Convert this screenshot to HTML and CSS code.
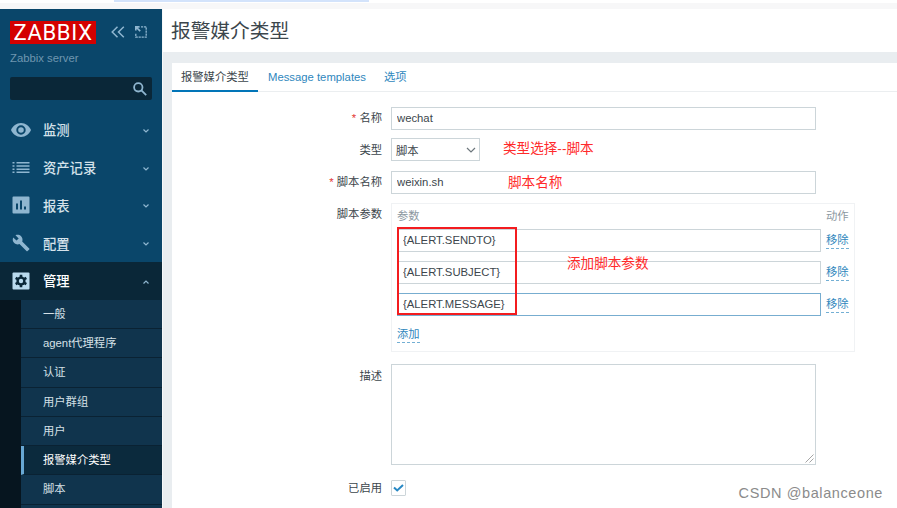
FILE: index.html
```html
<!DOCTYPE html>
<html lang="zh-CN">
<head>
  <meta charset="UTF-8">
  <title>报警媒介类型</title>
  <link rel="stylesheet" href="styles.css">
</head>
<body>

  <div class="browser-strip"><div class="browser-tab"></div></div>

  <div class="layout">
    <aside class="sidebar">
      <div class="sidebar-header">
        <div class="logo">ZABBIX</div>
        <svg class="icon-collapse" viewBox="0 0 14 12"><path d="M6.5 .8 1.2 6l5.3 5.2M12.8 .8 7.5 6l5.3 5.2"/></svg>
        <svg class="icon-hide" viewBox="0 0 12 12"><path d="M6 .8h5.200v10.400H.8V7" stroke-dasharray="2.200 .8"/><path d="M.8 4.600V.8h3.800M1 1l4.200 4.200" stroke-width="1.700"/></svg>
      </div>
      <div class="server-name">Zabbix server</div>
      <div class="search">
        <svg viewBox="0 0 14 14"><circle cx="5.3" cy="5.3" r="4.2"/><path d="m8.400 8.400 4.800 4.800"/></svg>
      </div>

      <nav class="menu">
        <a class="menu-item">
          <svg class="menu-icon" viewBox="0 0 20 20"><path fill-rule="evenodd" d="M10 3C5.500 3 1.700 5.900 0 10c1.700 4.100 5.500 7 10 7s8.300-2.900 10-7c-1.700-4.100-5.500-7-10-7zm0 11.700a4.700 4.700 0 1 1 0-9.400 4.700 4.700 0 0 1 0 9.400zM10 7.200a2.800 2.800 0 1 0 0 5.600 2.800 2.800 0 0 0 0-5.600z"/></svg>
          <span>监测</span>
          <svg class="chevron" viewBox="0 0 8 8"><path d="m1.500 2.500 2.500 2.500 2.500-2.500"/></svg>
        </a>
        <a class="menu-item">
          <svg class="menu-icon" viewBox="0 0 20 20"><path d="M1.500 4h2v1.500h-2zM5.500 4h13v1.500h-13zM1.500 7.200h2v1.500h-2zM5.500 7.200h13v1.500h-13zM1.500 10.400h2v1.500h-2zM5.500 10.400h13v1.500h-13zM1.500 13.600h2v1.500h-2zM5.500 13.600h13v1.500h-13z"/></svg>
          <span>资产记录</span>
          <svg class="chevron" viewBox="0 0 8 8"><path d="m1.500 2.500 2.500 2.500 2.500-2.500"/></svg>
        </a>
        <a class="menu-item">
          <svg class="menu-icon" viewBox="0 0 20 20"><path fill-rule="evenodd" d="M2.500 1.500h15a1 1 0 0 1 1 1v15a1 1 0 0 1-1 1h-15a1 1 0 0 1-1-1v-15a1 1 0 0 1 1-1zM5 8.500v6h2v-6zM9 5.500v9h2v-9zM13 11.500v3h2v-3z"/></svg>
          <span>报表</span>
          <svg class="chevron" viewBox="0 0 8 8"><path d="m1.500 2.500 2.500 2.500 2.500-2.500"/></svg>
        </a>
        <a class="menu-item">
          <svg class="menu-icon" viewBox="0 0 20 20"><path d="m18.200 15.500-7-7c.7-1.800.3-3.900-1.100-5.300C8.600 1.700 6.300 1.400 4.500 2.200l3.200 3.200-2.200 2.200L2.200 4.400C1.300 6.200 1.700 8.500 3.200 10c1.400 1.400 3.500 1.800 5.300 1.100l7 7c.3.300.8.300 1.100 0l1.600-1.600c.4-.3.400-.8 0-1z"/></svg>
          <span>配置</span>
          <svg class="chevron" viewBox="0 0 8 8"><path d="m1.500 2.500 2.500 2.500 2.500-2.500"/></svg>
        </a>
        <a class="menu-item active">
          <svg class="menu-icon" viewBox="0 0 20 20"><rect x="1.500" y="1.500" width="17" height="17" rx="1"/><g class="gear"><circle cx="10" cy="10" r="4.600"/><path d="M8.700 3.800h2.600v12.400H8.700zM4 8l1.300-2.300L16 12l-1.300 2.300zM4 12l1.300 2.300L16 8l-1.300-2.300z"/></g><circle cx="10" cy="10" r="2.200"/></svg>
          <span>管理</span>
          <svg class="chevron" viewBox="0 0 8 8"><path d="m1.500 5.500 2.500-2.500 2.500 2.500"/></svg>
        </a>
      </nav>

      <div class="submenu">
        <a>一般</a>
        <a>agent代理程序</a>
        <a>认证</a>
        <a>用户群组</a>
        <a>用户</a>
        <a class="selected">报警媒介类型</a>
        <a>脚本</a>
        <a></a>
      </div>
    </aside>

    <main class="content">
      <header class="page-title"><h1>报警媒介类型</h1></header>

      <div class="panel">
        <div class="tabs">
          <a class="tab current">报警媒介类型</a>
          <a class="tab">Message templates</a>
          <a class="tab">选项</a>
        </div>

        <form class="form">
          <label class="required">名称</label>
          <input class="field" type="text" value="wechat">

          <label>类型</label>
          <div class="select">
            <span>脚本</span>
            <svg viewBox="0 0 10 6"><path d="m1 1 4 4 4-4"/></svg>
            <div class="note note-type">类型选择--脚本</div>
          </div>

          <label class="required">脚本名称</label>
          <div class="field-wrap">
            <input class="field" type="text" value="weixin.sh">
            <div class="note note-name">脚本名称</div>
          </div>

          <label>脚本参数</label>
          <div class="params">
            <span class="params-head">参数</span>
            <span class="params-head">动作</span>
            <input class="field" type="text" value="{ALERT.SENDTO}">
            <a class="link">移除</a>
            <input class="field" type="text" value="{ALERT.SUBJECT}">
            <a class="link">移除</a>
            <input class="field focused" type="text" value="{ALERT.MESSAGE}">
            <a class="link">移除</a>
            <a class="link">添加</a>
            <div class="red-box"></div>
            <div class="note note-params">添加脚本参数</div>
          </div>

          <label class="label-description">描述</label>
          <div class="description-wrap">
            <textarea class="field description"></textarea>
            <svg class="grip" viewBox="0 0 9 9"><path d="M.5 8.500l8-8M4.500 8.500l4-4"/></svg>
          </div>

          <label class="label-enabled">已启用</label>
          <div class="checkbox">
            <svg viewBox="0 0 11 8"><path d="m1 3.500 3.200 3L10 1"/></svg>
          </div>
        </form>
      </div>
    </main>
  </div>

  <div class="watermark">CSDN @balanceone</div>

</body>
</html>
```
FILE: styles.css
```css
:root {
  --sidebar: #0a466a;
  --sidebar-dark: #0a2738;
  --submenu: #10344d;
  --icon: #8fb6d0;
  --text: #3c464c;
  --link: #2f87bd;
  --border: #ccd5d9;
}

* {
  box-sizing: border-box;
}

body {
  margin: 0;
  height: 508px;
  overflow: hidden;
  background: #e9edf0;
  color: var(--text);
  font-family: "Liberation Sans", "Noto Sans CJK SC", sans-serif;
  font-size: 11.3px;
}

.browser-strip {
  height: 9px;
  padding-left: 114px;
  background: linear-gradient(#fff 3px, #f7f7f8 3px);
}

.browser-tab {
  width: 255px;
  height: 2px;
  background: #d3e3fb;
}

.layout {
  display: flex;
  height: 499px;
}

/* sidebar */
.sidebar {
  width: 162px;
  flex: none;
  overflow: hidden;
  background: var(--sidebar);
}

.sidebar-header {
  display: flex;
  align-items: center;
  height: 22px;
  margin: 12px 0 0 10px;
}

.logo {
  width: 86px;
  height: 23px;
  background: #d40000;
  color: #fff;
  font-family: Roboto, "Liberation Sans", sans-serif;
  font-size: 22px;
  letter-spacing: .7px;
  line-height: 24px;
  text-align: center;
}

.sidebar svg,
.select svg,
.checkbox svg {
  fill: none;
  stroke: var(--icon);
  stroke-width: 1.5;
}

.sidebar .icon-collapse {
  width: 14px;
  height: 12px;
  margin-left: 15px;
}

.sidebar .icon-hide {
  width: 12px;
  height: 12px;
  margin-left: 10px;
  stroke-width: 1.3;
}

.server-name {
  margin: 8px 0 0 10px;
  line-height: 14px;
  color: #6f96b0;
}

.search {
  display: flex;
  align-items: center;
  justify-content: flex-end;
  width: 142px;
  height: 23px;
  margin: 12px 0 11px 10px;
  padding-right: 5px;
  border-radius: 2px;
  background: var(--sidebar-dark);
}

.search svg {
  width: 14px;
  height: 14px;
  stroke-width: 1.8;
}

.menu-item {
  display: flex;
  align-items: center;
  height: 37.75px;
  padding: 0 12px 0 11px;
  color: #d5e2ea;
  font-size: 13.3px;
  font-weight: 500;
}

.menu-item span {
  flex: 1;
  margin-left: 12px;
}

.menu-item .menu-icon {
  width: 20px;
  height: 20px;
  fill: var(--icon);
  stroke: none;
}

.menu-item .chevron {
  width: 8px;
  height: 8px;
  margin-top: 2px;
  stroke-width: 1.2;
}

.menu-item.active {
  background: var(--sidebar-dark);
  color: #fff;
}

.menu-item.active .menu-icon {
  fill: #b9daee;
}

.menu-item .gear {
  fill: var(--sidebar-dark);
}

.submenu {
  padding-left: 21px;
  background: #06151f;
}

.submenu a {
  display: block;
  height: 29.25px;
  padding-left: 22px;
  border-bottom: 1px solid #0a2233;
  background: var(--submenu);
  color: #d5e0e7;
  line-height: 29px;
}

.submenu .selected {
  padding-left: 19px;
  border-left: 3px solid #68a8d4;
  background-color: #0b2a3d;
  color: #fff;
}

/* page */
.content {
  flex: 1;
  border-left: 1px solid #f6f8f9;
}

.page-title {
  height: 43px;
  padding-left: 8px;
  background: #fff;
}

.page-title h1 {
  margin: 0;
  font-size: 19.7px;
  font-weight: 400;
  line-height: 45px;
}

.panel {
  height: 446px;
  margin: 11px 0 0 9px;
  background: #fff;
}

.tabs {
  display: flex;
  height: 29px;
  border-bottom: 1px solid #ebeef0;
}

.tab {
  height: 29px;
  padding: 0 8px 0 10px;
  color: var(--link);
  line-height: 28px;
}

.tab.current {
  width: 86px;
  padding: 0 9px;
  border-bottom: 2px solid #0275b8;
  color: var(--text);
}

.form {
  display: grid;
  grid-template-columns: 210px 464px;
  grid-template-rows: 23px 23px 23px 149px 104px 19px;
  column-gap: 9px;
  row-gap: 9px;
  padding-top: 15px;
}

.form label {
  line-height: 22px;
  text-align: right;
}

.required::before {
  content: "* ";
  color: #e33734;
}

.field {
  display: block;
  width: 425px;
  height: 23px;
  padding: 0 5px 1px;
  border: 1px solid var(--border);
  outline: none;
  background: #fff;
  color: var(--text);
  font: inherit;
}

.field-wrap {
  position: relative;
}

.select {
  position: relative;
  display: flex;
  align-items: center;
  justify-content: space-between;
  width: 89px;
  height: 23px;
  margin-top: -1px;
  padding: 0 3px 0 4px;
  border: 1px solid var(--border);
}

.select svg {
  width: 10px;
  height: 6px;
  stroke: #6d777d;
  stroke-width: 1.2;
}

.params {
  position: relative;
  display: grid;
  grid-template-columns: 424px 23px;
  grid-template-rows: 12px 23px 23px 23px 19px;
  column-gap: 5px;
  row-gap: 9px;
  align-items: center;
  align-content: start;
  padding: 4px 5px;
  border: 1px solid #f0f2f4;
}

.params-head {
  align-self: start;
  color: #8c989f;
  line-height: 17px;
}

.params .field {
  width: 424px;
}

.params .focused {
  border-color: #77add0;
}

.link {
  justify-self: start;
  border-bottom: 1px dashed #73afd4;
  color: var(--link);
  line-height: 16px;
}

.note {
  position: absolute;
  color: #ff2a2a;
  font-size: 13.6px;
  line-height: 18px;
  white-space: nowrap;
}

.note-type {
  left: 111px;
  top: 1px;
}

.note-name {
  left: 117px;
  top: 3px;
}

.note-params {
  left: 175px;
  top: 51px;
}

.red-box {
  position: absolute;
  left: 5px;
  top: 23px;
  width: 120px;
  height: 88px;
  border: 2px solid #f31c1f;
}

.form .label-description {
  margin-top: 4px;
}

.description-wrap {
  position: relative;
  width: 425px;
  margin-top: 3px;
}

.description {
  height: 101px;
  margin: 0;
  resize: none;
}

.grip {
  position: absolute;
  right: 2px;
  bottom: 2px;
  width: 9px;
  height: 9px;
  fill: none;
  stroke: #a5a5a5;
}

.form .label-enabled {
  margin-top: 3px;
}

.checkbox {
  display: flex;
  align-items: center;
  justify-content: center;
  width: 15px;
  height: 16px;
  margin-top: 6px;
  border: 1px solid var(--border);
  border-radius: 1px;
}

.checkbox svg {
  width: 11px;
  height: 8px;
  stroke: #2788c4;
  stroke-width: 2;
}

.watermark {
  position: absolute;
  right: 14px;
  bottom: 6px;
  color: #8b8b8b;
  font-size: 14.5px;
  letter-spacing: .6px;
  line-height: 18px;
}
```
